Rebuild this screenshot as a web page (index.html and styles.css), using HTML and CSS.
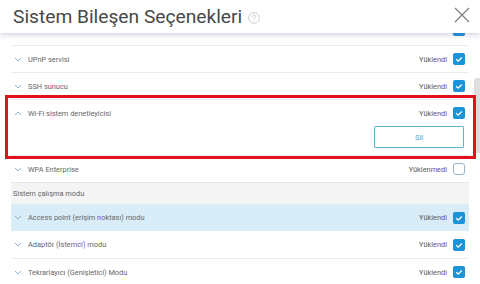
FILE: index.html
```html
<!DOCTYPE html>
<html lang="tr">
<head>
<meta charset="utf-8">
<link rel="stylesheet" href="styles.css">
</head>
<body>
<div class="dialog">
  <header class="head">
    <h1 class="title">Sistem Bileşen Seçenekleri</h1>
    <svg class="help" width="12" height="12" viewBox="0 0 13 13"><circle cx="6.5" cy="6.5" r="5.8" fill="none" stroke="#c4c4c4" stroke-width="0.9"/><path d="M4.7 5.1a1.8 1.8 0 1 1 2.6 1.6c-.6.3-.8.6-.8 1.2v.4" fill="none" stroke="#c4c4c4" stroke-width="0.9"/><circle cx="6.5" cy="9.7" r="0.55" fill="#c4c4c4"/></svg>
    <svg class="close" width="16" height="16" viewBox="0 0 16 16"><path d="M1 1L15 15M15 1L1 15" stroke="#7a7a7a" stroke-width="1.1" fill="none"/></svg>
  </header>
  <div class="list">
    <div class="row row-partial">
      <span class="status"></span><span class="cb on"><svg viewBox="0 0 12 12"><path d="M3.2 6.2l2 1.9 3.6-3.6" fill="none" stroke="#fff" stroke-width="1.3"/></svg></span>
    </div>
    <div class="row">
      <svg class="chev" viewBox="0 0 8 5"><path d="M1 1l3 3 3-3" fill="none" stroke="#86a8c6" stroke-width="0.9"/></svg>
      <span class="label">UPnP servisi</span>
      <span class="status">Yüklendi</span>
      <span class="cb on"><svg viewBox="0 0 12 12"><path d="M3.2 6.2l2 1.9 3.6-3.6" fill="none" stroke="#fff" stroke-width="1.3"/></svg></span>
    </div>
    <div class="row">
      <svg class="chev" viewBox="0 0 8 5"><path d="M1 1l3 3 3-3" fill="none" stroke="#86a8c6" stroke-width="0.9"/></svg>
      <span class="label">SSH sunucu</span>
      <span class="status">Yüklendi</span>
      <span class="cb on"><svg viewBox="0 0 12 12"><path d="M3.2 6.2l2 1.9 3.6-3.6" fill="none" stroke="#fff" stroke-width="1.3"/></svg></span>
    </div>
    <div class="item-open">
      <div class="row row-inner">
        <svg class="chev" viewBox="0 0 8 5"><path d="M1 4l3-3 3 3" fill="none" stroke="#86a8c6" stroke-width="0.9"/></svg>
        <span class="label">Wi-Fi sistem denetleyicisi</span>
        <span class="status">Yüklendi</span>
        <span class="cb on"><svg viewBox="0 0 12 12"><path d="M3.2 6.2l2 1.9 3.6-3.6" fill="none" stroke="#fff" stroke-width="1.3"/></svg></span>
      </div>
      <div class="actions"><button class="btn">Sil</button></div>
    </div>
    <div class="row">
      <svg class="chev" viewBox="0 0 8 5"><path d="M1 1l3 3 3-3" fill="none" stroke="#86a8c6" stroke-width="0.9"/></svg>
      <span class="label">WPA Enterprise</span>
      <span class="status">Yüklenmedi</span>
      <span class="cb off"></span>
    </div>
    <div class="section">Sistem çalışma modu</div>
    <div class="row row-active">
      <svg class="chev" viewBox="0 0 8 5"><path d="M1 1l3 3 3-3" fill="none" stroke="#86a8c6" stroke-width="0.9"/></svg>
      <span class="label">Access point (erişim noktası) modu</span>
      <span class="status">Yüklendi</span>
      <span class="cb on"><svg viewBox="0 0 12 12"><path d="M3.2 6.2l2 1.9 3.6-3.6" fill="none" stroke="#fff" stroke-width="1.3"/></svg></span>
    </div>
    <div class="row row-noline">
      <svg class="chev" viewBox="0 0 8 5"><path d="M1 1l3 3 3-3" fill="none" stroke="#86a8c6" stroke-width="0.9"/></svg>
      <span class="label">Adaptör (İstemci) modu</span>
      <span class="status">Yüklendi</span>
      <span class="cb on"><svg viewBox="0 0 12 12"><path d="M3.2 6.2l2 1.9 3.6-3.6" fill="none" stroke="#fff" stroke-width="1.3"/></svg></span>
    </div>
    <div class="row">
      <svg class="chev" viewBox="0 0 8 5"><path d="M1 1l3 3 3-3" fill="none" stroke="#86a8c6" stroke-width="0.9"/></svg>
      <span class="label">Tekrarlayıcı (Genişletici) Modu</span>
      <span class="status">Yüklendi</span>
      <span class="cb on"><svg viewBox="0 0 12 12"><path d="M3.2 6.2l2 1.9 3.6-3.6" fill="none" stroke="#fff" stroke-width="1.3"/></svg></span>
    </div>
    <div class="thumb"></div>
  </div>
  <div class="highlight"></div>
</div>
</body>
</html>
```
FILE: styles.css
```css
html, body { margin: 0; padding: 0; background: #fff; }
body { font-family: Roboto, "Noto Sans", sans-serif; }
.dialog { position: relative; width: 480px; height: 284px; overflow: hidden; background: #fff; }
.head {
  position: relative; z-index: 2; height: 33px; background: #fff;
  display: flex; align-items: center; padding-left: 13px;
  box-shadow: 0 2px 5px rgba(70, 80, 150, 0.24);
}
.title { margin: 0; font-size: 19.2px; font-weight: 400; color: #474747; line-height: 33px; }
.help { margin-left: 6px; margin-top: 2px; }
.close { margin-left: auto; margin-right: 10px; margin-top: -4px; }
.list { position: relative; padding: 0 11px; display: flow-root; }
.row {
  display: flex; align-items: center; height: 27px; box-sizing: border-box;
  border-top: 1px solid #e6eef4; font-size: 7.4px; color: #666;
}
.row-partial { margin-top: -15px; border-top: none; align-items: flex-start; padding-top: 6px; }
.row-noline { border-top: none; }
.row-active { background: #d8edf8; border-top: none; }
.chev { width: 8px; height: 5px; margin-left: 3px; flex: none; }
.label { margin-left: 6px; color: #666; }
.status { margin-left: auto; color: #5a5a5a; margin-right: 6px; }
.cb { width: 12px; height: 12px; box-sizing: border-box; border-radius: 2px; margin-right: 4px; flex: none; display: block; }
.cb svg { width: 12px; height: 12px; display: block; }
.cb.on { background: #1c92d8; }
.cb.off { border: 1px solid #97b3c8; border-radius: 3px; background: #fff; }
.item-open { border-top: 1px solid #e6eef4; padding-bottom: 7px; }
.row-inner { border-top: none; height: 26px; }
.actions { display: flex; justify-content: flex-end; padding-right: 5px; }
.btn {
  width: 90px; height: 22px; box-sizing: border-box; background: #fff;
  border: 1px solid #63b3d8; border-radius: 1px; color: #47a6da;
  font-family: Roboto, sans-serif; font-size: 7.4px; padding: 0;
}
.section {
  height: 22px; box-sizing: border-box; background: #f4f4f4; border-top: 1px solid #e8e8e8;
  display: flex; align-items: center; padding-left: 2px; font-size: 7.4px; color: #666;
}
.thumb { position: absolute; right: 0; top: 45px; width: 6px; height: 75px; background: #dedede; border-radius: 3px 0 0 3px; }
.highlight {
  position: absolute; left: 5px; top: 95px; width: 471px; height: 64px;
  box-sizing: border-box; border: 3px solid #e2131d; z-index: 3;
}
```
